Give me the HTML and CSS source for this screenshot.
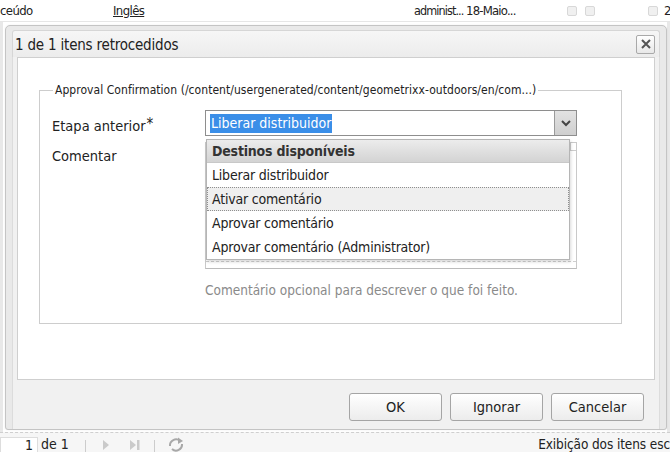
FILE: index.html
```html
<!DOCTYPE html>
<html lang="pt">
<head>
<meta charset="utf-8">
<link rel="stylesheet" href="styles.css">
</head>
<body>
<div class="page">
  <div class="toprow">
    <span class="cell c-name">ceúdo</span>
    <span class="cell c-lang">Inglês</span>
    <span class="cell c-user">administ...</span>
    <span class="cell c-date">18-Maio...</span>
    <span class="cell c-chk"><i class="chk"></i><i class="chk"></i></span>
    <span class="cell c-chk2"><i class="chk"></i>2</span>
  </div>
  <div class="grid"></div>
  <div class="pager">
    <span class="pg-input">1</span>
    <span class="pg-of">de 1</span>
    <span class="pg-sep"></span>
    <svg class="pg-ico pg-next" width="12" height="14" viewBox="0 0 12 14"><path d="M3 2 L9 7 L3 12 Z" fill="#cacaca"/></svg>
    <svg class="pg-ico pg-last" width="14" height="14" viewBox="0 0 14 14"><path d="M2 2 L8 7 L2 12 Z" fill="#cacaca"/><rect x="9" y="2" width="2.5" height="10" fill="#cacaca"/></svg>
    <span class="pg-sep"></span>
    <svg class="pg-ico pg-ref" width="18" height="15" viewBox="0 0 18 15"><path d="M3 9 A6 6 0 0 1 13 4" fill="none" stroke="#a8a8a8" stroke-width="2"/><path d="M11 0.5 L16 4 L11 7 Z" fill="#a8a8a8"/><path d="M15 7 A6 6 0 0 1 5 12" fill="none" stroke="#a8a8a8" stroke-width="2"/></svg>
    <span class="pg-info">Exibição dos itens esc</span>
  </div>

  <div class="dialog">
    <div class="dlg-head">
      <span class="dlg-title">1 de 1 itens retrocedidos</span>
      <span class="dlg-close"><svg width="12" height="12" viewBox="0 0 12 12"><path d="M2 2 L10 10 M10 2 L2 10" stroke="#555" stroke-width="2"/></svg></span>
    </div>
    <div class="dlg-main">
      <div class="dlg-body">
        <fieldset class="fs">
          <legend class="fs-legend">Approval Confirmation (/content/usergenerated/content/geometrixx-outdoors/en/com...)</legend>
          <div class="row">
            <label class="lbl">Etapa anterior<span class="req">*</span></label>
            <div class="field">
              <div class="combo">
                <span class="combo-text"><span class="sel">Liberar distribuidor</span></span>
                <span class="combo-btn"><svg width="12" height="8" viewBox="0 0 12 8"><path d="M2 2 L6 6 L10 2" fill="none" stroke="#444" stroke-width="2"/></svg></span>
              </div>
              <div class="list">
                <div class="list-head">Destinos disponíveis</div>
                <div class="list-item">Liberar distribuidor</div>
                <div class="list-item hover">Ativar comentário</div>
                <div class="list-item">Aprovar comentário</div>
                <div class="list-item">Aprovar comentário (Administrator)</div>
              </div>
            </div>
          </div>
          <div class="row row2">
            <label class="lbl lbl2">Comentar</label>
            <div class="field">
              <div class="textarea"><span class="ta-corner"></span></div>
              <div class="hint">Comentário opcional para descrever o que foi feito.</div>
            </div>
          </div>
        </fieldset>
      </div>
      <div class="dlg-foot">
        <button class="btn">OK</button>
        <button class="btn">Ignorar</button>
        <button class="btn">Cancelar</button>
      </div>
    </div>
  </div>
</div>
</body>
</html>
```

FILE: styles.css
```css
* { box-sizing: border-box; }
html, body { margin: 0; padding: 0; }
body {
  width: 670px;
  height: 452px;
  overflow: hidden;
  background: #fff;
  font-family: "DejaVu Sans Condensed", "DejaVu Sans", "Noto Sans", sans-serif;
  color: #222;
}
.page {
  position: relative;
  width: 670px;
  height: 452px;
  display: flex;
  flex-direction: column;
}
.toprow {
  height: 22px;
  display: flex;
  align-items: center;
  font-size: 13px;
  letter-spacing: -0.6px;
  border-bottom: 1px solid #e6e6e6;
  white-space: nowrap;
  overflow: hidden;
}
.cell { display: flex; align-items: center; flex: none; }
.c-name { width: 113px; }
.c-lang { width: 301px; text-decoration: underline; }
.c-user { width: 52px; font-size: 12.5px; letter-spacing: -0.9px; }
.c-date { width: 101px; letter-spacing: -0.8px; }
.c-chk { width: 81px; gap: 8px; }
.c-chk2 { gap: 6px; }
.chk {
  display: inline-block;
  width: 10px;
  height: 10px;
  border: 1px solid #d8d8d8;
  border-radius: 2px;
  background: #f0f0f0;
}
.grid {
  flex: 1;
  border-left: 3px solid #e8e8e8;
  border-right: 3px solid #e8e8e8;
}
.pager {
  height: 20px;
  border-top: 1px dashed #cfcfcf;
  background: #f6f6f6;
  display: flex;
  align-items: flex-end;
  font-size: 14px;
  white-space: nowrap;
  overflow: hidden;
}
.pg-input {
  width: 38px;
  height: 15px;
  background: #fff;
  border: 1px solid #ddd;
  border-bottom: none;
  text-align: right;
  padding-right: 4px;
  line-height: 15px;
  flex: none;
}
.pg-of { margin-left: 3px; width: 44px; line-height: 15px; flex: none; }
.pg-sep { width: 1px; height: 12px; background: #ccc; flex: none; }
.pg-ico { flex: none; }
.pg-next { margin: 0 0 0 14px; }
.pg-last { margin: 0 12px 0 16px; }
.pg-ref { margin: 0 0 0 12px; }
.pg-info { margin-left: auto; line-height: 15px; flex: none; font-size: 13.5px; letter-spacing: -0.1px; }

/* dialog: modal window floating over the grid */
.dialog {
  position: absolute;
  left: 5px;
  top: 25px;
  width: 662px;
  height: 405px;
  border: 1px solid #c4c4c4;
  border-radius: 5px 5px 3px 3px;
  background: #e9e9e9;
  padding: 4px 6px 0;
  display: flex;
  flex-direction: column;
  box-shadow: 0 0 2px rgba(0,0,0,0.08);
}
.dlg-head {
  height: 27px;
  display: flex;
  align-items: center;
  justify-content: space-between;
  padding: 0 4px 0 2px;
  background: linear-gradient(#f6f6f6, #ececec);
  border: 1px solid #d6d6d6;
  border-bottom: none;
  border-radius: 3px 3px 0 0;
}
.dlg-title { font-size: 15px; color: #222; letter-spacing: -0.2px; padding-top: 1px; }
.dlg-close {
  width: 19px;
  height: 19px;
  border: 1px solid #a9a9a9;
  border-radius: 2px;
  background: linear-gradient(#fff, #e8e8e8);
  display: flex;
  align-items: center;
  justify-content: center;
}
.dlg-main {
  flex: 1;
  display: flex;
  flex-direction: column;
  padding: 0 4px;
  background: #f1f1f1;
  border-left: 1px solid #dcdcdc;
  border-right: 1px solid #dcdcdc;
}
.dlg-body {
  height: 323px;
  background: #fff;
  border: 1px solid #cfcfcf;
  padding: 25px 32px 0 21px;
}
.fs {
  margin: 0;
  padding: 13px 12px 0 12px;
  height: 241px;
  border: 1px solid #cdcdcd;
}
.fs-legend {
  font-size: 12px;
  color: #222;
  padding: 0 2px;
  margin-left: 1px;
  letter-spacing: 0.05px;
}
.row { display: flex; }
.lbl {
  width: 153px;
  font-size: 14.5px;
  padding-top: 8px;
  color: #222;
}
.req { font-size: 15px; vertical-align: top; margin-left: 1px; position: relative; top: -3px; }
.field { position: relative; width: 372px; }
.combo {
  height: 26px;
  display: flex;
  border: 1px solid #8e8e8e;
  background: #fff;
}
.combo-text { flex: 1; padding: 4px 0 0 4px; font-size: 14px; }
.sel { background: #3a8ee8; color: #fff; padding: 1px 1px 2px; }
.combo-btn {
  width: 22px;
  border-left: 1px solid #9a9a9a;
  background: linear-gradient(#e2e2e2, #cfcfcf);
  display: flex;
  align-items: center;
  justify-content: center;
}
.row2 { margin-top: 6px; }
.lbl2 { padding-top: 6px; }
.textarea {
  position: relative;
  height: 127px;
  border: 1px solid #c9c9c9;
  border-bottom-color: #bbb;
  background: #fff;
}
.textarea::after {
  content: "";
  position: absolute;
  left: 0;
  right: 0;
  bottom: 6px;
  border-bottom: 1px dashed #cfcfcf;
}
.ta-corner {
  position: absolute;
  right: 0;
  top: 0;
  width: 6px;
  height: 8px;
  border: 1px solid #ccc;
  border-top: none;
  border-right: none;
}
.hint {
  margin-top: 13px;
  font-size: 13.5px;
  color: #8a8a8a;
}
.list {
  position: absolute;
  left: 1px;
  top: 29px;
  width: 364px;
  border: 1px solid #b5b5b5;
  background: #fff;
  box-shadow: 1px 2px 3px rgba(0,0,0,0.15);
  z-index: 2;
  font-size: 14px;
  letter-spacing: -0.2px;
}
.list-head {
  height: 23px;
  line-height: 23px;
  padding-left: 5px;
  font-weight: bold;
  color: #333;
  background: linear-gradient(#ececec, #d3d3d3);
  border-bottom: 1px solid #c8c8c8;
}
.list-item {
  height: 24px;
  line-height: 22px;
  padding-left: 4px;
  border: 1px solid transparent;
  color: #222;
}
.list-item.hover {
  background: #efefef;
  border: 1px dotted #8f8f8f;
}
.dlg-foot {
  flex: 1;
  display: flex;
  justify-content: flex-end;
  align-items: flex-start;
  gap: 8px;
  padding: 13px 11px 0 0;
}
.btn {
  width: 93px;
  height: 28px;
  font-family: inherit;
  font-size: 14.5px;
  color: #222;
  border: 1px solid #a5a5a5;
  border-radius: 3px;
  background: linear-gradient(#ffffff, #ececec);
  padding: 0;
}
```
